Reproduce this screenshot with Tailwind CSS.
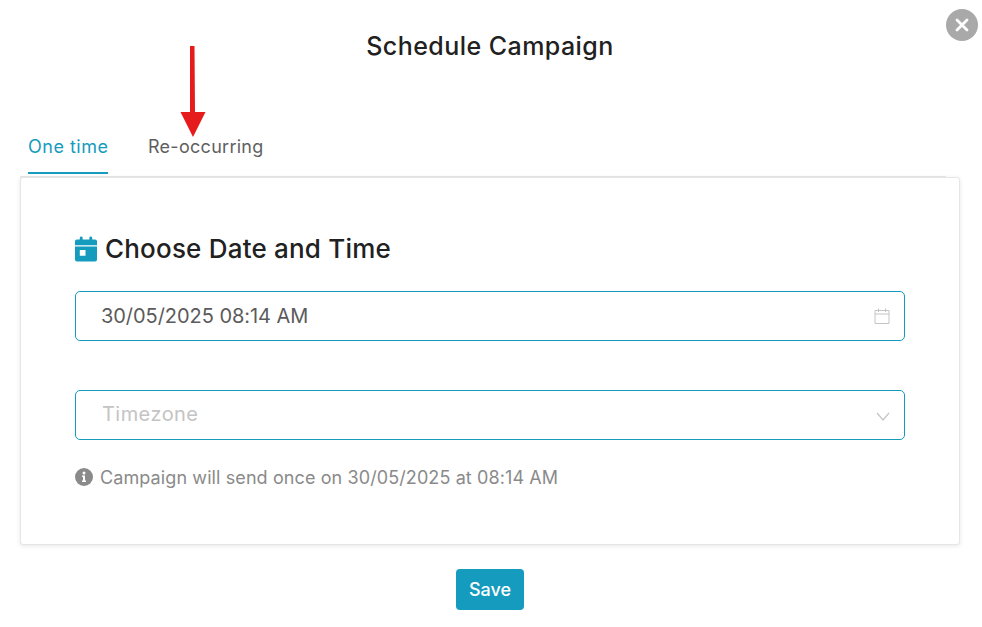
<!DOCTYPE html>
<html>
<head>
<meta charset="utf-8">
<script src="https://cdn.jsdelivr.net/npm/@tailwindcss/browser@4"></script>
</head>
<body class="bg-white font-['Inter','Liberation_Sans',sans-serif]">
<div class="relative w-[982px] h-[627px] overflow-hidden bg-white">
  <button class="absolute left-[946px] top-[9px] w-[32px] h-[32px] rounded-full bg-[#a9a9a9] flex items-center justify-center">
    <svg width="14" height="14" viewBox="0 0 14 14" fill="none" stroke="#fff" stroke-width="2.8" stroke-linecap="round"><path d="M2 2l10 10M12 2L2 12"/></svg>
  </button>
  <svg class="absolute left-[178px] top-[44px]" width="30" height="94" viewBox="0 0 30 94"><path d="M12 2h4.500l.5 66h-5z" fill="#e61b1b"/><path d="M2.500 68h25L15 93z" fill="#e61b1b"/></svg>

  <div class="pt-[31px] flex flex-col">
    <h1 class="h-[30px] leading-[30px] text-center text-[25px] font-medium text-[#212121] tracking-[0.45px] -translate-x-[1px]">Schedule Campaign</h1>
    <div class="mt-[59px] ml-[20px] w-[926px] h-[58px] border-b-2 border-[#e8e8e8] flex gap-[40px] pl-[8px]">
      <div class="h-[54px] border-b-2 border-[#149bbd] w-[80px] text-[#149bbd] text-[18px] leading-[54px] tracking-[0.5px] whitespace-nowrap">One time</div>
      <div class="h-[54px] text-[#5f5f5f] text-[18px] leading-[54px] tracking-[0.28px] whitespace-nowrap">Re-occurring</div>
    </div>
    <div class="ml-[20px] -mt-[1px] w-[940px] h-[368px] bg-white border border-[#e6e6e6] rounded-[3px] shadow-[0_1px_4px_rgba(0,0,0,0.1)] px-[54px] pt-[55px]">
      <div class="flex items-center gap-[7px] h-[34px]">
        <svg width="22" height="26" viewBox="0 0 23 26" fill="#149bbd" class="-translate-y-[1px]"><path d="M5 1.500a1.500 1.500 0 0 1 3 0V3h7V1.500a1.500 1.500 0 0 1 3 0V3h3a2 2 0 0 1 2 2v4H0V5a2 2 0 0 1 2-2h3z"/><path fill-rule="evenodd" d="M0 10.500h23V24a2 2 0 0 1-2 2H2a2 2 0 0 1-2-2zM5 14v6h6v-6z"/></svg>
        <h2 class="text-[26px] leading-[32px] font-medium text-[#212121] tracking-[0.2px] whitespace-nowrap ml-[1px] -translate-y-[1px]">Choose Date and Time</h2>
      </div>
      <div class="mt-[24px] w-[830px] h-[50px] border border-[#149bbd] rounded-[5px] flex items-center justify-between pl-[25px] pr-[14px]">
        <span class="text-[20px] text-[#5b5b5b] tracking-[-0.05px]">30/05/2025 08:14 AM</span>
        <svg width="16" height="16" viewBox="0 0 16 16" fill="none" stroke="#c4c4c4" stroke-width="1"><path d="M1 2.500h14v13H1zM1 6h14M4.500 0.500v3.500M11.500 0.500v3.500"/></svg>
      </div>
      <div class="mt-[49px] w-[830px] h-[50px] border border-[#149bbd] rounded-[5px] flex items-center justify-between pl-[26px] pr-[15px]">
        <span class="text-[20px] leading-[26px] text-[#c4c4c4] tracking-[0.45px] -translate-y-[1px]">Timezone</span>
        <svg width="14" height="9" viewBox="0 0 14 9" fill="none" stroke="#c4c4c4" stroke-width="1.200" class="translate-x-[1px] translate-y-[1px]"><path d="M1 1l6 7 6-7"/></svg>
      </div>
      <div class="mt-[27px] flex items-center gap-[7px] h-[20px]">
        <svg width="18" height="18" viewBox="0 0 18 18"><circle cx="9" cy="9" r="9" fill="#8a8a8a"/><circle cx="9" cy="5" r="1.500" fill="#fff"/><path d="M7 7.500h3v5h1v1.500H7v-1.500h1V9H7z" fill="#fff"/></svg>
        <span class="text-[18px] text-[#8a8a8a] tracking-[0.1px] whitespace-nowrap">Campaign will send once on 30/05/2025 at 08:14 AM</span>
      </div>
    </div>
    <button class="mt-[24px] ml-[456px] w-[68px] h-[41px] rounded-[4px] bg-[#149bbd] text-white text-[18px] font-medium">Save</button>
  </div>
</div>
</body>
</html>
